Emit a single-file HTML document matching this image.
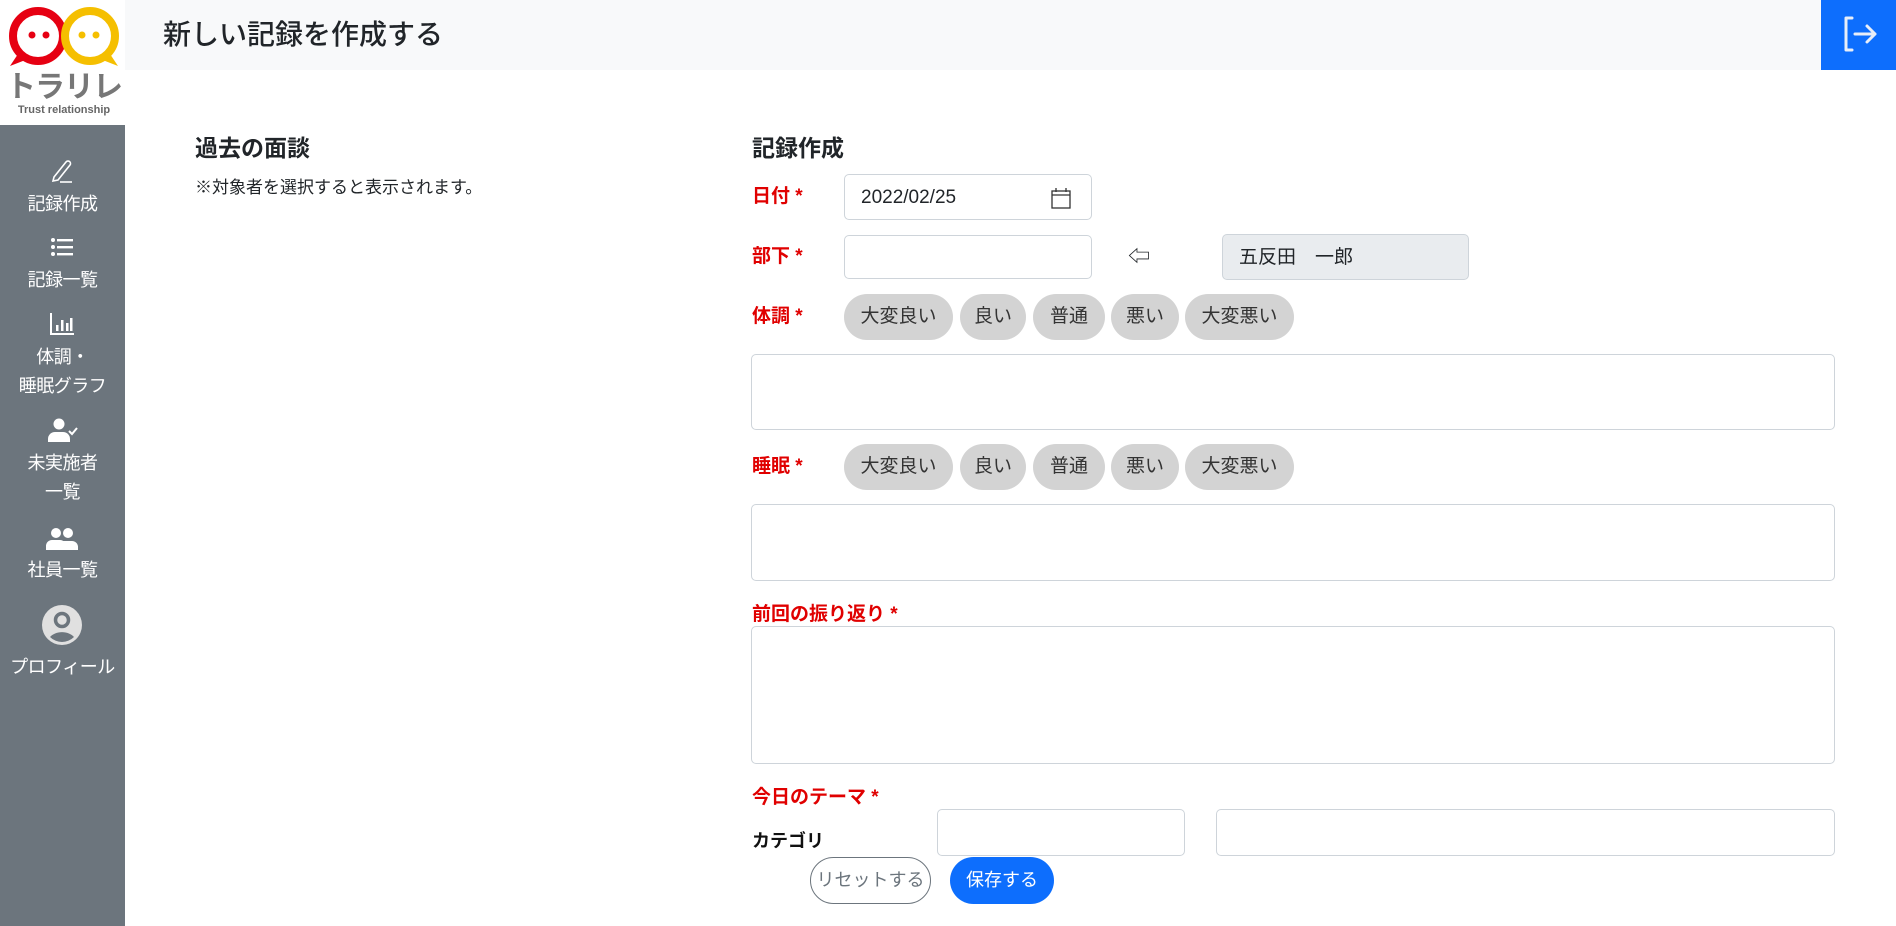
<!DOCTYPE html>
<html><head><meta charset="utf-8"><style>
*{box-sizing:border-box;margin:0;padding:0}
body{width:1896px;height:926px;position:relative;background:#fff;font-family:"Liberation Sans","Noto Sans CJK JP",sans-serif;color:#212529;overflow:hidden}
.a{position:absolute}
.side{left:0;top:125px;width:125px;height:801px;background:#6c757d}
.si{position:absolute;left:0;width:125px;text-align:center;color:#fff;font-size:18px;line-height:29px;white-space:nowrap;letter-spacing:-0.5px}
.hdr{left:125px;top:0;width:1771px;height:70px;background:#f8f9fa}
.lbl{color:#e00000;font-size:19px;font-weight:bold;position:absolute}
.inp{position:absolute;border:1px solid #ced4da;border-radius:5px;background:#fff}
.pill{position:absolute;height:46px;border-radius:23px;background:#d3d3d3;font-size:19px;line-height:46px;text-align:center;color:#333}
</style></head><body>
<!-- logo -->
<svg class="a" style="left:4px;top:4px" width="120" height="66" viewBox="0 0 120 66">
<path d="M14 50 L6 62 L24 55" fill="#e60012"/>
<path d="M106 50 L114 62 L96 55" fill="#f5bf00"/>
<circle cx="34" cy="32" r="25" fill="none" stroke="#e60012" stroke-width="8"/>
<circle cx="86" cy="32" r="25" fill="none" stroke="#f5bf00" stroke-width="8"/>
<circle cx="28" cy="31" r="3.5" fill="#e60012"/><circle cx="42" cy="31" r="3.5" fill="#e60012"/>
<circle cx="78" cy="31" r="3.5" fill="#f5bf00"/><circle cx="92" cy="31" r="3.5" fill="#f5bf00"/>
</svg>
<div class="a" style="left:4px;top:70px;width:120px;text-align:center;font-size:30px;font-weight:bold;color:#777;letter-spacing:-1px;line-height:36px;white-space:nowrap">トラリレ</div>
<div class="a" style="left:4px;top:104px;width:120px;text-align:center;font-size:11px;font-weight:bold;color:#666;white-space:nowrap">Trust relationship</div>

<div class="a side">
<svg class="a" style="left:50px;top:33px" width="24" height="26" viewBox="0 0 24 26"><path d="M4 19 L16 4 a2.5 2.5 0 0 1 4 3 L8 22 L3 23z" fill="none" stroke="#fff" stroke-width="1.6"/><path d="M10 24 H22" stroke="#fff" stroke-width="1.6"/></svg>
<div class="si" style="top:65px">記録作成</div>
<svg class="a" style="left:51px;top:113px" width="22" height="18" viewBox="0 0 22 18"><g fill="#fff"><circle cx="2" cy="2" r="2"/><circle cx="2" cy="9" r="2"/><circle cx="2" cy="16" r="2"/><rect x="6" y="1" width="16" height="2.4"/><rect x="6" y="8" width="16" height="2.4"/><rect x="6" y="15" width="16" height="2.4"/></g></svg>
<div class="si" style="top:141px">記録一覧</div>
<svg class="a" style="left:50px;top:188px" width="24" height="22" viewBox="0 0 24 22"><path d="M1 0 V21 H24" stroke="#fff" stroke-width="2" fill="none"/><g fill="#fff"><rect x="6" y="12" width="2.5" height="6"/><rect x="11" y="7" width="2.5" height="11"/><rect x="16" y="10" width="2.5" height="8"/><rect x="20" y="5" width="2.5" height="13"/></g></svg>
<div class="si" style="top:218px">体調・</div>
<div class="si" style="top:247px">睡眠グラフ</div>
<svg class="a" style="left:48px;top:293px" width="30" height="24" viewBox="0 0 30 24"><circle cx="11" cy="6" r="5.5" fill="#fff"/><path d="M0 24 v-3 a7 7 0 0 1 7 -7 h8 a7 7 0 0 1 7 7 v3z" fill="#fff"/><path d="M21 13 l3 3 l5 -6" stroke="#fff" stroke-width="2" fill="none"/></svg>
<div class="si" style="top:324px">未実施者</div>
<div class="si" style="top:353px">一覧</div>
<svg class="a" style="left:46px;top:403px" width="32" height="22" viewBox="0 0 32 22"><circle cx="10" cy="5" r="5" fill="#fff"/><circle cx="22" cy="5" r="5" fill="#fff"/><path d="M0 22 v-4 a6 6 0 0 1 6 -6 h8 a6 6 0 0 1 6 6 v4z M18 22 v-4 a6 6 0 0 0 -2 -5 h10 a6 6 0 0 1 6 6 v3z" fill="#fff"/></svg>
<div class="si" style="top:431px">社員一覧</div>
<svg class="a" style="left:42px;top:480px" width="40" height="40" viewBox="0 0 40 40"><circle cx="20" cy="20" r="20" fill="#e0e0e0"/><circle cx="20" cy="15" r="6.5" fill="none" stroke="#6c757d" stroke-width="3.5"/><path d="M8 32 a14 10 0 0 1 24 0 a17 17 0 0 1 -24 0z" fill="#6c757d"/></svg>
<div class="si" style="top:528px">プロフィール</div>
</div>

<div class="a hdr"></div>
<div class="a" style="left:163px;top:15px;font-size:28px;font-weight:500;line-height:40px">新しい記録を作成する</div>
<div class="a" style="left:1821px;top:0;width:75px;height:70px;background:#0d6efd">
<svg class="a" style="left:21px;top:15px" width="36" height="38" viewBox="0 0 36 38"><path d="M10 3 H4 V35 H10" fill="none" stroke="#e8eef8" stroke-width="3" stroke-linecap="round" stroke-linejoin="round"/><path d="M13 19 H33 M25 11 L33 19 L25 27" fill="none" stroke="#e8eef8" stroke-width="3" stroke-linecap="round" stroke-linejoin="round"/></svg>
</div>

<div class="a" style="left:195px;top:133px;font-size:23px;font-weight:bold;line-height:30px">過去の面談</div>
<div class="a" style="left:195px;top:176px;font-size:17px;line-height:24px">※対象者を選択すると表示されます。</div>

<div class="a" style="left:752px;top:133px;font-size:23px;font-weight:bold;line-height:30px">記録作成</div>

<div class="lbl" style="left:752px;top:181px">日付 *</div>
<div class="inp" style="left:844px;top:174px;width:248px;height:46px;font-size:19px;line-height:46px;padding-left:16px">2022/02/25
<svg class="a" style="left:206px;top:12px" width="20" height="22" viewBox="0 0 20 22"><rect x="1" y="4" width="18" height="17" fill="none" stroke="#333" stroke-width="1.3"/><path d="M1 8 H19 M5 1 V5 M15 1 V5" stroke="#333" stroke-width="1.3"/></svg></div>

<div class="lbl" style="left:752px;top:241px">部下 *</div>
<div class="inp" style="left:844px;top:235px;width:248px;height:44px"></div>
<div class="a" style="left:1128px;top:243px;font-size:22px;line-height:28px">⇦</div>
<div class="a" style="left:1222px;top:234px;width:247px;height:46px;background:#e9ecef;border:1px solid #ced4da;border-radius:5px;font-size:19px;line-height:46px;padding-left:16px">五反田　一郎</div>

<div class="lbl" style="left:752px;top:301px">体調 *</div>
<div class="pill" style="left:844px;top:294px;width:109px">大変良い</div>
<div class="pill" style="left:960px;top:294px;width:66px">良い</div>
<div class="pill" style="left:1033px;top:294px;width:72px">普通</div>
<div class="pill" style="left:1111px;top:294px;width:68px">悪い</div>
<div class="pill" style="left:1185px;top:294px;width:109px">大変悪い</div>
<div class="inp" style="left:751px;top:354px;width:1084px;height:76px"></div>

<div class="lbl" style="left:752px;top:451px">睡眠 *</div>
<div class="pill" style="left:844px;top:444px;width:109px">大変良い</div>
<div class="pill" style="left:960px;top:444px;width:66px">良い</div>
<div class="pill" style="left:1033px;top:444px;width:72px">普通</div>
<div class="pill" style="left:1111px;top:444px;width:68px">悪い</div>
<div class="pill" style="left:1185px;top:444px;width:109px">大変悪い</div>
<div class="inp" style="left:751px;top:504px;width:1084px;height:77px"></div>

<div class="lbl" style="left:752px;top:599px">前回の振り返り *</div>
<div class="inp" style="left:751px;top:626px;width:1084px;height:138px"></div>

<div class="lbl" style="left:752px;top:782px">今日のテーマ *</div>
<div class="a" style="left:752px;top:827px;font-size:18px;font-weight:bold;color:#111">カテゴリ</div>
<div class="inp" style="left:937px;top:809px;width:248px;height:47px"></div>
<div class="inp" style="left:1216px;top:809px;width:619px;height:47px"></div>

<div class="a" style="left:810px;top:857px;width:121px;height:47px;border:1px solid #6c757d;border-radius:24px;color:#6c757d;font-size:18px;line-height:45px;text-align:center">リセットする</div>
<div class="a" style="left:950px;top:857px;width:104px;height:47px;background:#0d6efd;border-radius:24px;color:#fff;font-size:18px;line-height:47px;text-align:center">保存する</div>
</body></html>
